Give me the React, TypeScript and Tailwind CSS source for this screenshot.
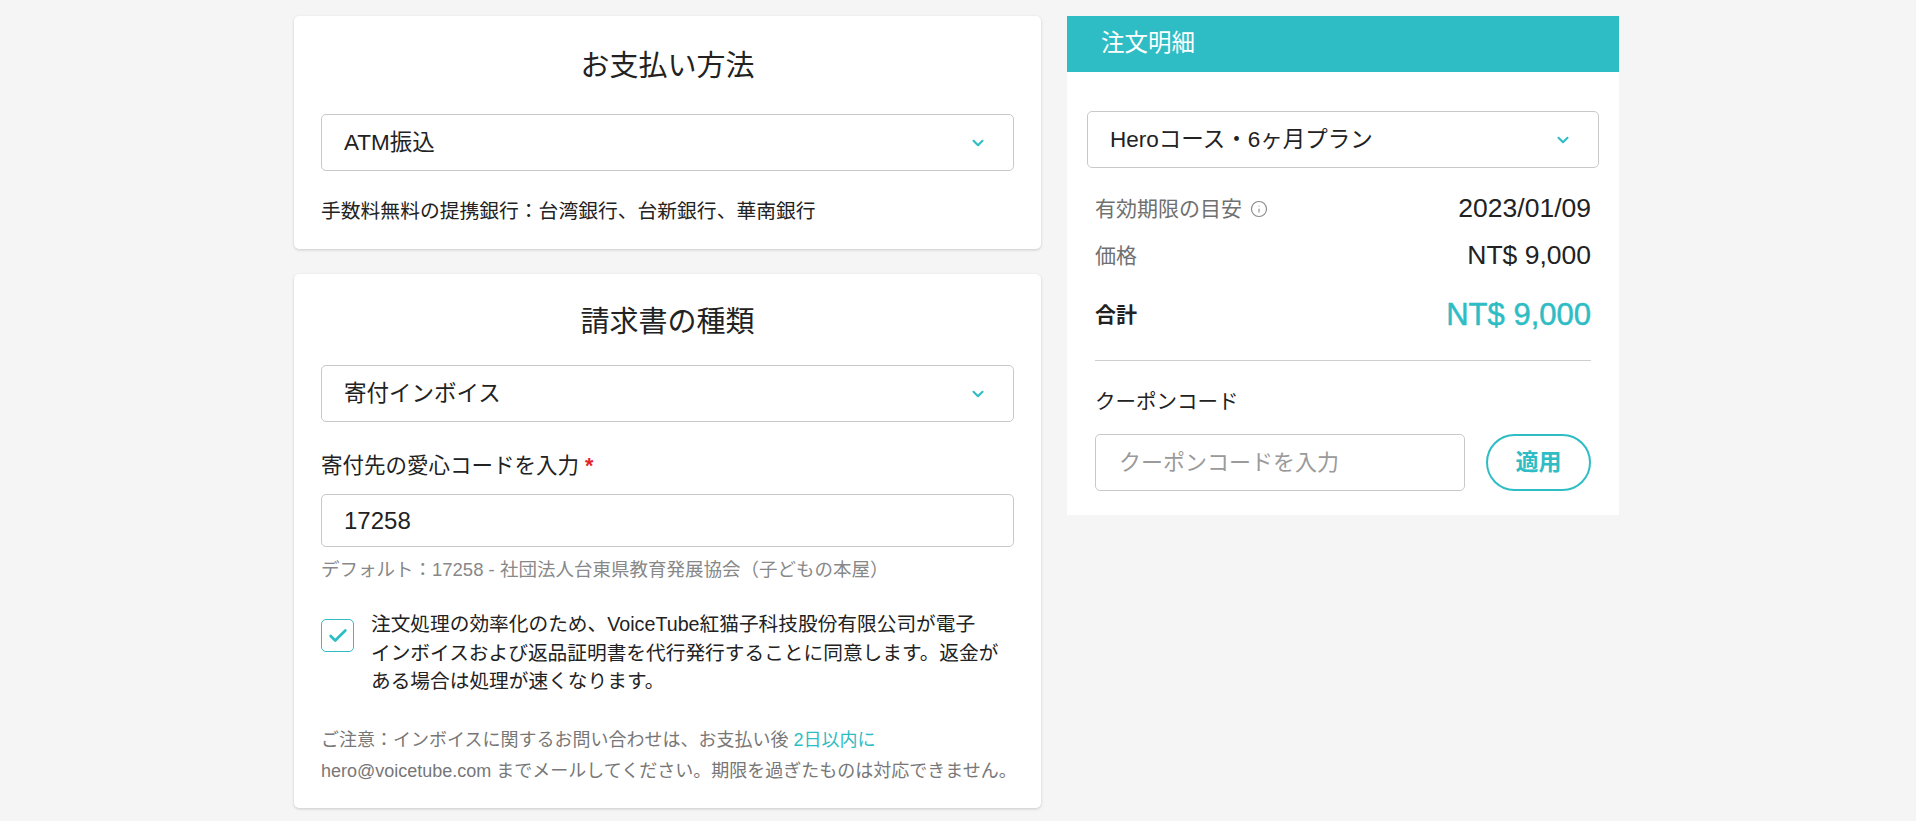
import React from 'react';
import { ChevronDown, Check, Info } from 'lucide-react';

const FONT = "font-['Liberation_Sans','Noto_Sans_CJK_JP',sans-serif]";

const SelectBox = ({ value, className = '' }: { value: string; className?: string }) => (
  <div
    className={`flex h-[57px] items-center justify-between rounded-[5px] border border-[#c9c9c9] pl-[22px] pr-[26px] text-[22.5px] text-[#222] ${className}`}
  >
    <span>{value}</span>
    <ChevronDown size={18} strokeWidth={2.8} className="text-[#2ebdc4]" />
  </div>
);

const Row = ({ label, value, info }: { label: string; value: string; info?: boolean }) => (
  <div className="flex h-[32px] items-center justify-between">
    <span className="flex items-center gap-[8px] text-[21px] text-[#707070]">
      {label}
      {info && <Info size={18} strokeWidth={1.5} className="text-[#8a8a8a]" />}
    </span>
    <span className="text-[26.5px] text-[#222]">{value}</span>
  </div>
);

export default function App() {
  return (
    <div className={`min-h-screen bg-[#f5f5f5] pt-4 pr-[3px] pb-10 ${FONT}`}>
      <div className="mx-auto flex w-[1325px] items-start gap-[26px]">
        {/* left column */}
        <div className="flex w-[747px] flex-col gap-[25px]">
          {/* payment method */}
          <div className="rounded-[5px] bg-white px-[27px] pt-[30px] pb-[24px] shadow-[0_1px_3px_rgba(0,0,0,0.18)]">
            <h2 className="h-[40px] text-center text-[29px] leading-[40px] text-[#222]">お支払い方法</h2>
            <SelectBox value="ATM振込" className="mt-[28px]" />
            <p className="mt-[26px] text-[19.8px] leading-[28px] text-[#222]">
              手数料無料の提携銀行：台湾銀行、台新銀行、華南銀行
            </p>
          </div>

          {/* invoice */}
          <div className="rounded-[5px] bg-white px-[27px] pt-[28px] pb-[21px] shadow-[0_1px_3px_rgba(0,0,0,0.18)]">
            <h2 className="h-[40px] text-center text-[29px] leading-[40px] text-[#222]">請求書の種類</h2>
            <SelectBox value="寄付インボイス" className="mt-[23px]" />

            <label className="mt-[29px] block text-[21.5px] leading-[30px] text-[#222]">
              寄付先の愛心コードを入力 <span className="font-bold text-[#e5252a]">*</span>
            </label>
            <div className="mt-[13px] flex h-[53px] items-center rounded-[5px] border border-[#c9c9c9] px-[22px] text-[24px] text-[#222]">
              17258
            </div>
            <p className="mt-[11px] text-[18.5px] leading-[24px] text-[#888]">
              デフォルト：17258 - 社団法人台東県教育発展協会（子どもの本屋）
            </p>

            <div className="mt-[28px] flex items-start gap-[17px]">
              <div className="mt-[9px] flex h-[33px] w-[33px] shrink-0 items-center justify-center rounded-[5px] border-[1.5px] border-[#2ebdc4]">
                <Check size={22} strokeWidth={3} className="text-[#2ebdc4]" />
              </div>
              <p className="text-[19.7px] leading-[28.5px] whitespace-nowrap text-[#222]">
                注文処理の効率化のため、VoiceTube紅猫子科技股份有限公司が電子
                <br />
                インボイスおよび返品証明書を代行発行することに同意します。返金が
                <br />
                ある場合は処理が速くなります。
              </p>
            </div>

            <p className="mt-[29px] text-[18px] leading-[31px] whitespace-nowrap text-[#777]">
              ご注意：インボイスに関するお問い合わせは、お支払い後 <span className="text-[#2ebdc4]">2日以内に</span>
              <br />
              hero@voicetube.com までメールしてください。期限を過ぎたものは対応できません。
            </p>
          </div>
        </div>

        {/* order summary */}
        <div className="w-[552px] bg-white">
          <div className="flex h-[56px] items-center bg-[#2ebdc4] pl-[34px] text-[23.5px] text-white">注文明細</div>
          <div className="px-[20px] pt-[39px] pb-[24px]">
            <SelectBox value="Heroコース・6ヶ月プラン" />
            <div className="px-[8px]">
              <div className="mt-[25px]">
                <Row label="有効期限の目安" value="2023/01/09" info />
              </div>
              <div className="mt-[15px]">
                <Row label="価格" value="NT$ 9,000" />
              </div>
              <div className="mt-[25px] flex h-[36px] items-center justify-between">
                <span className="text-[21px] font-bold text-[#222]">合計</span>
                <span className="text-[31px] text-[#2ebdc4] [-webkit-text-stroke:0.5px_#2ebdc4]">NT$ 9,000</span>
              </div>
              <div className="mt-[27px] h-px bg-[#cfcfcf]" />
              <div className="mt-[27px] text-[20.5px] leading-[28px] text-[#222]">クーポンコード</div>
              <div className="mt-[18px] flex items-center gap-[21px]">
                <div className="flex h-[57px] flex-1 items-center rounded-[5px] border border-[#c9c9c9] px-[23px] text-[22px] text-[#9a9a9a]">
                  クーポンコードを入力
                </div>
                <button className="flex h-[57px] w-[105px] items-center justify-center rounded-full border-2 border-[#2ebdc4] text-[23px] font-bold text-[#2ebdc4]">
                  適用
                </button>
              </div>
            </div>
          </div>
        </div>
      </div>
    </div>
  );
}
